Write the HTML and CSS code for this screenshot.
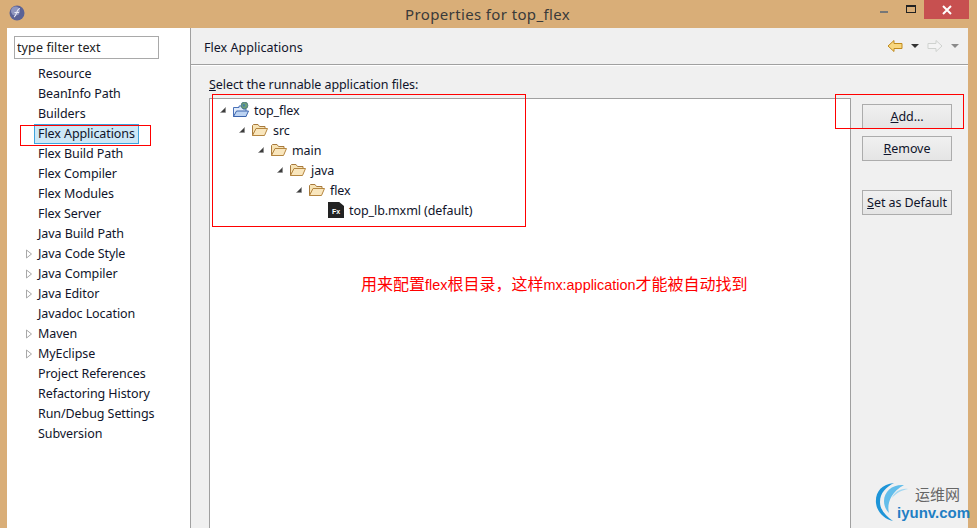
FILE: index.html
```html
<!DOCTYPE html>
<html lang="en">
<head>
<meta charset="utf-8">
<title>Properties for top_flex</title>
<link rel="stylesheet" href="styles.css">
</head>
<body>
<svg class="defs" width="0" height="0" aria-hidden="true">
  <symbol id="open" viewBox="0 0 8 8"><path d="M6.500 1.500V6.500H1.500Z" fill="#3c3c3c" stroke="#8a8a8a" stroke-width=".6"/></symbol>
  <symbol id="closed" viewBox="0 0 8 10"><path d="M1.500 1L6.500 5L1.500 9Z" fill="#fff" stroke="#a8a8a8"/></symbol>
  <symbol id="folder" viewBox="0 0 16 14"><path d="M.5 12.500V2.500L1.500 1.500H6L7.500 3.500H13V5.500H4.500L.5 12.500Z" fill="#f7e3b5" stroke="#a87a3c"/><path d="M.5 12.500L4 5.500H15.500L12.500 12.500Z" fill="#f9e6bd" stroke="#b58640"/></symbol>
</svg>
<div class="window">
  <header class="titlebar">
    <svg class="appicon" width="16" height="16" viewBox="0 0 16 16"><circle cx="8" cy="8" r="7.500" fill="#5a6296"/><circle cx="6.500" cy="6" r="4.500" fill="#8f96bf"/><path d="M5 12C8 11 7 4 11 3.500M5.500 7.500H10" stroke="#e6e8f5" stroke-width="1.100" fill="none"/></svg>
    <h1 class="title">Properties for top_flex</h1>
    <div class="winctl">
      <span class="min"></span>
      <span class="max"></span>
      <span class="close"><svg width="10" height="10" viewBox="0 0 10 10"><path d="M1 1L9 9M9 1L1 9" stroke="#fff" stroke-width="2"/></svg></span>
    </div>
  </header>
  <div class="content">
    <aside class="sidebar">
      <input class="filter" type="text" value="type filter text">
      <ul class="nav">
        <li class="nav-row"><span class="label">Resource</span></li>
        <li class="nav-row"><span class="label">BeanInfo Path</span></li>
        <li class="nav-row"><span class="label">Builders</span></li>
        <li class="nav-row"><span class="label selected">Flex Applications</span></li>
        <li class="nav-row"><span class="label">Flex Build Path</span></li>
        <li class="nav-row"><span class="label">Flex Compiler</span></li>
        <li class="nav-row"><span class="label">Flex Modules</span></li>
        <li class="nav-row"><span class="label">Flex Server</span></li>
        <li class="nav-row"><span class="label">Java Build Path</span></li>
        <li class="nav-row"><svg class="twisty" width="8" height="10"><use href="#closed"/></svg><span class="label">Java Code Style</span></li>
        <li class="nav-row"><svg class="twisty" width="8" height="10"><use href="#closed"/></svg><span class="label">Java Compiler</span></li>
        <li class="nav-row"><svg class="twisty" width="8" height="10"><use href="#closed"/></svg><span class="label">Java Editor</span></li>
        <li class="nav-row"><span class="label">Javadoc Location</span></li>
        <li class="nav-row"><svg class="twisty" width="8" height="10"><use href="#closed"/></svg><span class="label">Maven</span></li>
        <li class="nav-row"><svg class="twisty" width="8" height="10"><use href="#closed"/></svg><span class="label">MyEclipse</span></li>
        <li class="nav-row"><span class="label">Project References</span></li>
        <li class="nav-row"><span class="label">Refactoring History</span></li>
        <li class="nav-row"><span class="label">Run/Debug Settings</span></li>
        <li class="nav-row"><span class="label">Subversion</span></li>
      </ul>
    </aside>
    <main class="main">
      <div class="pagehead">
        <h2 class="pagetitle">Flex Applications</h2>
        <div class="history">
          <svg width="16" height="14" viewBox="0 0 16 14"><path d="M1 7L7 1.500V4.500H15V9.500H7V12.500Z" fill="#f8d77e" stroke="#c08a1c"/></svg>
          <span class="drop dark"></span>
          <svg class="fwd" width="16" height="14" viewBox="0 0 16 14"><path d="M15 7L9 1.500V4.500H1V9.500H9V12.500Z" fill="#f4f4f4" stroke="#cfd2cf"/></svg>
          <span class="drop"></span>
        </div>
      </div>
      <div class="pagebody">
        <p class="caption"><u>S</u>elect the runnable application files:</p>
        <div class="columns">
          <div class="tree">
            <div class="tree-row"><svg class="arrow" width="8" height="8"><use href="#open"/></svg><svg class="ficon" width="16" height="16" viewBox="0 0 16 16"><path d="M.5 14.500V5.500H6V4H10V7H13V14.500Z" fill="#dfeafa" stroke="#4a72b8"/><path d="M.5 14.500L3.500 9H15.500L13 14.500Z" fill="#bcd3f2" stroke="#3b64ad"/><circle cx="11.500" cy="3.500" r="3.400" fill="#6f9f78" stroke="#3d6a80" stroke-width=".7"/><path d="M9.500 2.500L11.500 2L12 4L10.500 5Z" fill="#3f7fb0"/></svg><span class="tree-text">top_flex</span></div>
            <div class="tree-row d1"><svg class="arrow" width="8" height="8"><use href="#open"/></svg><svg class="ficon" width="16" height="14"><use href="#folder"/></svg><span class="tree-text">src</span></div>
            <div class="tree-row d2"><svg class="arrow" width="8" height="8"><use href="#open"/></svg><svg class="ficon" width="16" height="14"><use href="#folder"/></svg><span class="tree-text">main</span></div>
            <div class="tree-row d3"><svg class="arrow" width="8" height="8"><use href="#open"/></svg><svg class="ficon" width="16" height="14"><use href="#folder"/></svg><span class="tree-text">java</span></div>
            <div class="tree-row d4"><svg class="arrow" width="8" height="8"><use href="#open"/></svg><svg class="ficon" width="16" height="14"><use href="#folder"/></svg><span class="tree-text">flex</span></div>
            <div class="tree-row d5"><span class="fxfile">Fx</span><span class="tree-text">top_lb.mxml (default)</span></div>
          </div>
          <div class="buttons">
            <button class="btn" type="button"><u>A</u>dd...</button>
            <button class="btn" type="button"><u>R</u>emove</button>
            <button class="btn gap" type="button"><u>S</u>et as Default</button>
          </div>
        </div>
      </div>
    </main>
  </div>
</div>
<span class="mark mark-nav"></span>
<span class="mark mark-tree"></span>
<span class="mark mark-add"></span>
<p class="note">用来配置<span class="latin">flex</span>根目录，这样<span class="latin">mx:application</span>才能被自动找到</p>
<div class="logo">
  <svg class="logo-arc" width="44" height="42" viewBox="0 0 44 42"><path d="M20 2C7 3 1 12 2 22C3 31 10 38 19 40C12 35 6 29 6 21C6 12 12 6 20 2Z" fill="#1e95d8"/><path d="M30 4C19 3 10 10 10 20C10 25 12 29 15 32C13 25 15 12 30 4Z" fill="#62bdea"/><path d="M34 8C27 7 20 11 18 17C22 12 28 9 34 8Z" fill="#a4d8f2"/></svg>
  <span class="logo-cn">运维网</span>
  <span class="logo-en">iyunv.com</span>
</div>
</body>
</html>
```
FILE: styles.css
```css
* { box-sizing: border-box; }
html, body { margin: 0; height: 100%; overflow: hidden; }
body { background: #d9ae78; font: 12.500px/20px "Noto Sans", "Noto Sans CJK SC", sans-serif; letter-spacing: -.08px; color: #10142a; position: relative; }
.defs { position: absolute; }
.window { display: flex; flex-direction: column; height: 528px; padding: 0 9px 0 7px; }
.titlebar { flex: 0 0 28px; display: flex; align-items: center; position: relative; }
.appicon { margin: 0 0 0 2px; position: relative; top: -1px; }
.title { position: absolute; left: 398px; top: 3px; margin: 0; font: 400 15px/22px "Noto Sans", sans-serif; color: #3a3a3a; letter-spacing: .37px; }
.winctl { margin-left: auto; display: flex; align-items: flex-start; align-self: flex-start; margin-right: -1px; }
.min { width: 8px; height: 2px; background: #777; margin: 11px 0 0; }
.max { width: 10px; height: 8px; border: 1px solid #222; border-top-width: 2px; margin: 5px 0 0 18px; }
.close { width: 45px; height: 19px; background: #c75050; display: flex; align-items: center; justify-content: center; margin-left: 8px; }
.content { flex: 1; display: flex; min-height: 0; background: #f0f0f0; }
.sidebar { width: 184px; background: #fff; border-right: 1px solid #a0a0a0; padding: 8px 0 0 7px; flex: none; }
.filter { display: block; width: 145px; height: 23px; border: 1px solid #a9a9a9; padding: 0 2px; font: 12.500px "Noto Sans", sans-serif; letter-spacing: .1px; color: #222; background: #fff; outline: none; }
.nav { list-style: none; margin: 5px 0 0; padding: 0 0 0 24px; }
.nav-row { height: 20px; position: relative; white-space: nowrap; line-height: 20px; }
.twisty { position: absolute; left: -13px; top: 5px; }
.label { display: inline-block; }
.selected { position: relative; background: #cde8f7; outline: 1px solid #3fa3dc; outline-offset: -1px; height: 20px; padding: 0 4px; margin-left: -4px; line-height: 20px; }
.main { flex: 1; display: flex; flex-direction: column; min-width: 0; }
.pagehead { height: 37px; border-bottom: 1px solid #a0a0a0; box-shadow: 0 1px 0 #fff; display: flex; align-items: center; justify-content: space-between; padding: 0 9px 0 13px; flex: none; }
.pagetitle { margin: 0; font: 400 12.500px/20px "Noto Sans", sans-serif; letter-spacing: .03px; padding-top: 4px; }
.history { display: flex; align-items: center; }
.drop { width: 0; height: 0; border: 4px solid transparent; border-top: 4px solid #8a8a8a; border-bottom: 0; margin: 0 0 0 8px; }
.drop.dark { border-top-color: #333; }
.fwd { margin-left: 8px; }
.pagebody { flex: 1; padding: 9px 16px 0 18px; display: flex; flex-direction: column; min-height: 0; }
.caption { margin: 0 0 4px; padding-top: 1px; height: 20px; line-height: 20px; }
.columns { flex: 1; display: flex; gap: 11px; min-height: 0; }
.tree { width: 642px; background: #fff; border: 1px solid #a0a0a0; border-bottom: 0; padding: 1px 0 0 9px; }
.tree-row { height: 20px; display: flex; align-items: center; white-space: nowrap; }
.tree-text { padding-top: 2px; }
.d1 { padding-left: 19px; } .d2 { padding-left: 38px; } .d3 { padding-left: 57px; } .d4 { padding-left: 76px; } .d5 { padding-left: 109px; }
.arrow { margin-right: 6px; flex: none; }
.ficon { margin-right: 5px; flex: none; }
.fxfile { width: 16px; height: 16px; background: #222; color: #fff; font: 700 7px/20px "Liberation Sans", sans-serif; letter-spacing: 0; text-align: center; margin-right: 5px; flex: none; clip-path: polygon(0 0, 70% 0, 100% 25%, 100% 100%, 0 100%); }
.buttons { flex: 1; display: flex; flex-direction: column; padding-top: 6px; }
.btn { width: 90px; height: 25px; margin: 0 0 7px; padding: 0; border: 1px solid #acacac; background: linear-gradient(#f0f0f0, #e5e5e5); font: 12.500px/20px "Noto Sans", sans-serif; letter-spacing: -.08px; color: #10142a; }
.btn.gap { margin-top: 22px; }
.mark { position: absolute; border: 1px solid #f00; pointer-events: none; }
.mark-nav { left: 20px; top: 125px; width: 131px; height: 21px; }
.mark-tree { left: 212px; top: 94px; width: 314px; height: 133px; }
.mark-add { left: 835px; top: 94px; width: 129px; height: 35px; }
.note { position: absolute; left: 361px; top: 273px; margin: 0; color: #f00; font: 16px/20px "Noto Sans CJK SC", sans-serif; letter-spacing: 0; white-space: nowrap; }
.latin { font: 14.400px/20px "Liberation Sans", sans-serif; }
.logo { position: absolute; left: 874px; top: 481px; width: 98px; height: 47px; }
.logo-arc { position: absolute; left: 0; top: 0; }
.logo-cn { position: absolute; left: 41px; top: 3px; font: 15px/20px "Noto Sans CJK SC", sans-serif; color: #666; letter-spacing: 0; }
.logo-en { position: absolute; left: 23px; top: 22px; font: 700 15px/20px "Liberation Sans", sans-serif; letter-spacing: 0; color: #1f7fc4; white-space: nowrap; }
```
